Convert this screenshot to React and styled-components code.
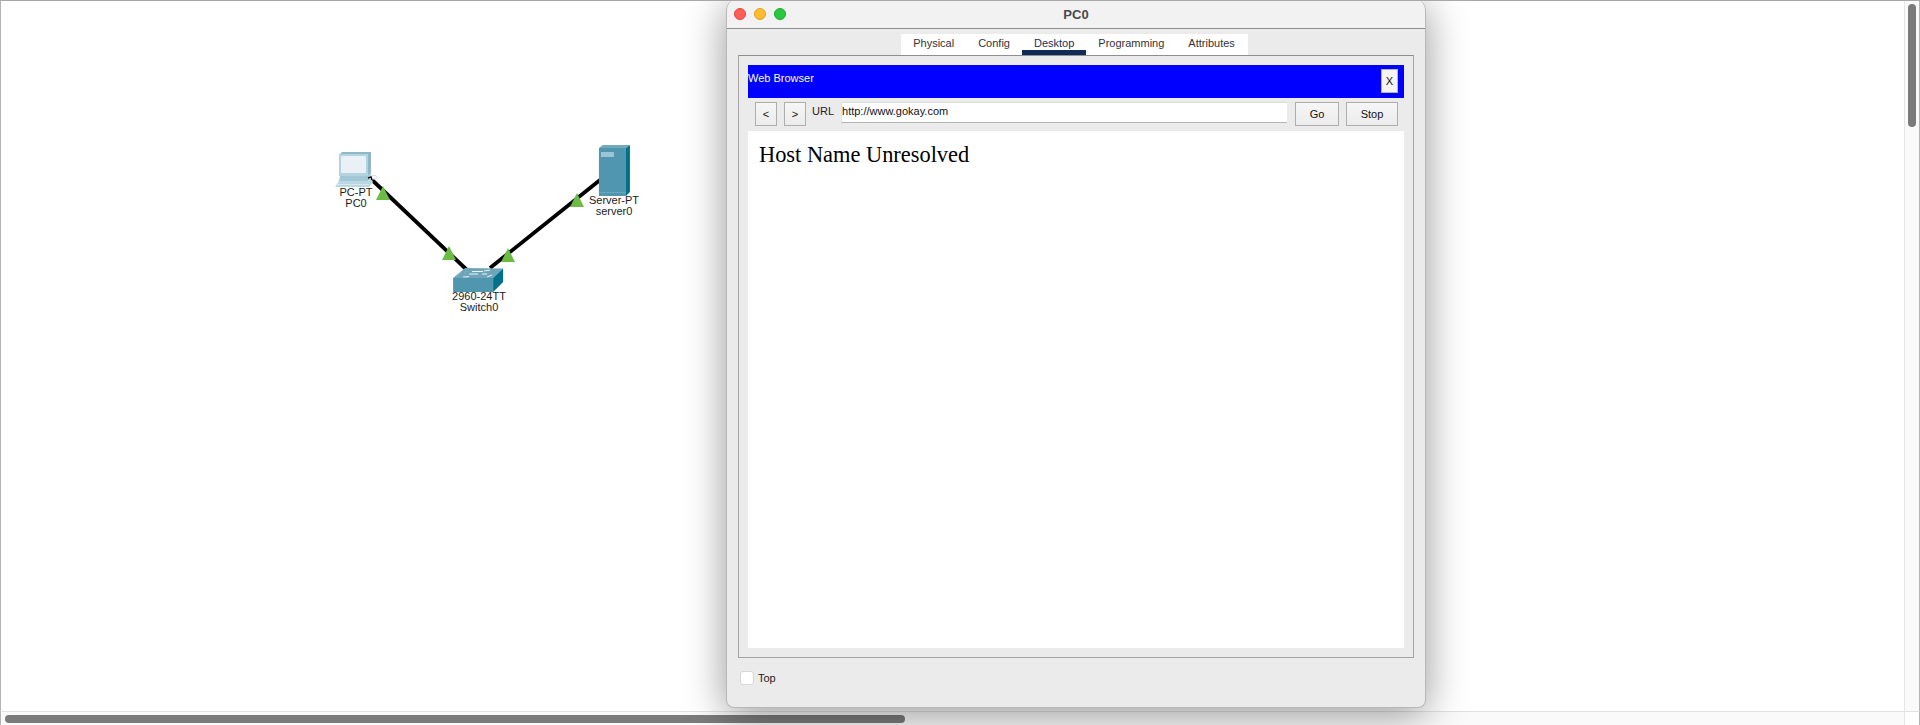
import React from 'react'
import styled, { createGlobalStyle } from 'styled-components'

const GlobalStyle = createGlobalStyle`
  html, body {
    margin: 0;
    padding: 0;
    background: #fff;
    overflow: hidden;
    font-family: 'Liberation Sans', Arial, sans-serif;
  }
`

const tabs = ['Physical', 'Config', 'Desktop', 'Programming', 'Attributes']

const triangles = [
  [383, 186],
  [449, 246],
  [508, 248],
  [577, 193],
]

const PcIcon = () => (
  <svg width='46' height='38' viewBox='333 151 46 38'>
    <polygon points='339,155 342,152 371,152 371,173 368,176 339,176' fill='#8fb8c6' />
    <rect x='339' y='154' width='29' height='22' fill='#b3d4df' />
    <rect x='341' y='156' width='25' height='17' rx='1' fill='#e9f1f6' />
    <polygon points='340,176 368,176 371,173 371,178 368,181 339,181' fill='#a3c7d4' />
    <polygon points='339,181 368,181 371,178 373,182 369,187 335,187' fill='#b9d8e3' />
    <rect x='337' y='184' width='32' height='1' fill='#d6e7ed' />
    <path d='M369 176 l6 -0.5 c3 0.5 2.5 3 -0.5 3.5 l-5 0.5' fill='#fff' stroke='#c5d9e0' strokeWidth='0.8' />
    <path d='M368 178 l3 -1 l1 3' fill='none' stroke='#000' strokeWidth='1.4' />
  </svg>
)

const SwitchIcon = () => (
  <svg width='52' height='26' viewBox='453 267 52 26'>
    <polygon points='453,278 465,268 503,268.5 493,278' fill='#6ea6b9' />
    <rect x='453' y='278' width='40' height='14' fill='#5096ae' />
    <polygon points='493,278 503,268.5 503,282 493,292' fill='#02708a' />
    <path d='M463 277 l6 -0.4 M487 277 l5 -2 M472 271.5 h11 M469 274 h9 M484 271 l6 -1 M482 274 h5' stroke='#e8f2f5' strokeWidth='1' fill='none' />
    <path d='M456 276.5 l6 -5 M467 271 l-3 2' stroke='#82b4c5' strokeWidth='1' fill='none' />
  </svg>
)

const ServerIcon = () => (
  <svg width='32' height='52' viewBox='598 145 32 52'>
    <polygon points='599,148 603,145 630,145 626,148' fill='#72aabd' />
    <rect x='599' y='148' width='27' height='48' fill='#5096ae' />
    <polygon points='626,148 630,145 630,192 626,196' fill='#02708a' />
    <rect x='601' y='152' width='13' height='5' fill='#9cc4d2' />
    <rect x='599' y='192' width='27' height='1' fill='#6aa6ba' />
  </svg>
)

const App = () => {
  return (
    <Page>
      <GlobalStyle />
      <Canvas>
        <Links width='1903' height='710'>
          <line x1='370' y1='178' x2='467' y2='270' />
          <line x1='600' y1='180' x2='490' y2='268' />
          {triangles.map(([x, y]) => (
            <polygon key={x} points={`${x},${y} ${x + 7},${y + 14} ${x - 7},${y + 14}`} />
          ))}
        </Links>
        <Node $x={356} $y={151}>
          <PcIcon />
          <NodeLabel>PC-PT</NodeLabel>
          <NodeLabel>PC0</NodeLabel>
        </Node>
        <Node $x={479} $y={267}>
          <SwitchIcon />
          <NodeLabel>2960-24TT</NodeLabel>
          <NodeLabel>Switch0</NodeLabel>
        </Node>
        <Node $x={614} $y={145}>
          <ServerIcon />
          <NodeLabel>Server-PT</NodeLabel>
          <NodeLabel>server0</NodeLabel>
        </Node>
      </Canvas>
      <VerticalTrack>
        <VerticalThumb />
      </VerticalTrack>
      <HorizontalTrack>
        <HorizontalThumb />
      </HorizontalTrack>
      <Corner />

      <Window>
        <TitleBar>
          <Lights>
            <Light $color='#ff5f57' $edge='#e0443e' />
            <Light $color='#febc2e' $edge='#dea123' />
            <Light $color='#28c840' $edge='#1aab29' />
          </Lights>
          PC0
        </TitleBar>
        <WindowBody>
          <TabBar>
            {tabs.map((tab) => (
              <Tab key={tab} $active={tab === 'Desktop'}>
                {tab}
              </Tab>
            ))}
          </TabBar>
          <Frame>
            <BrowserHeader>
              Web Browser
              <CloseButton>X</CloseButton>
            </BrowserHeader>
            <NavRow>
              <NavButton $width={22}>&lt;</NavButton>
              <NavButton $width={22}>&gt;</NavButton>
              <UrlLabel>URL</UrlLabel>
              <UrlInput readOnly value='http://www.gokay.com' />
              <NavButton $width={44}>Go</NavButton>
              <NavButton $width={52}>Stop</NavButton>
            </NavRow>
            <Content>
              <Message>Host Name Unresolved</Message>
            </Content>
          </Frame>
          <Footer>
            <Check />
            Top
          </Footer>
        </WindowBody>
      </Window>
    </Page>
  )
}

const Page = styled.div`
  position: relative;
  width: 1920px;
  height: 725px;
  overflow: hidden;
  display: grid;
  grid-template-columns: 1fr 16px;
  grid-template-rows: 1fr 14px;
  background: #fff;
  border-top: 1px solid #a8a8a8;
  box-sizing: border-box;
`

const Canvas = styled.div`
  position: relative;
  background: #fff;
  border-left: 1px solid #b4b4b4;
`

const Links = styled.svg`
  position: absolute;
  left: -1px;
  top: -1px;
  line {
    stroke: #000;
    stroke-width: 3.8;
  }
  polygon {
    fill: #6cbb45;
  }
`

const Node = styled.div`
  position: absolute;
  left: ${(p) => p.$x - 1}px;
  top: ${(p) => p.$y - 1}px;
  transform: translateX(-50%);
  display: flex;
  flex-direction: column;
  align-items: center;
  svg {
    display: block;
    margin-bottom: -2px;
  }
`

const NodeLabel = styled.span`
  font-size: 11px;
  line-height: 11px;
  color: #1c1c1c;
  white-space: nowrap;
`

const VerticalTrack = styled.div`
  background: #fafafa;
  border-left: 1px solid #e6e6e6;
  border-right: 1px solid #b4b4b4;
  padding: 3px 3px 0;
`

const VerticalThumb = styled.div`
  width: 8px;
  height: 123px;
  border-radius: 4px;
  background: #7b7b7b;
`

const HorizontalTrack = styled.div`
  background: #fafafa;
  border-top: 1px solid #e2e2e2;
  border-left: 1px solid #b4b4b4;
  padding: 3px 0 0 4px;
`

const HorizontalThumb = styled.div`
  width: 900px;
  height: 8px;
  border-radius: 4px;
  background: #7b7b7b;
`

const Corner = styled.div`
  background: #fff;
  border-top: 1px solid #e2e2e2;
  border-left: 1px solid #e6e6e6;
  border-right: 1px solid #b4b4b4;
`

const Window = styled.section`
  position: absolute;
  left: 726px;
  top: -1px;
  width: 700px;
  height: 708px;
  display: flex;
  flex-direction: column;
  box-sizing: border-box;
  border-radius: 10px 10px 8px 8px;
  background: #ebebeb;
  border: 1px solid #b8b8b8;
  border-top: 0;
  box-shadow: 0 6px 40px rgba(0, 0, 0, 0.42);
`

const TitleBar = styled.header`
  position: relative;
  height: 28px;
  flex: none;
  display: flex;
  align-items: center;
  justify-content: center;
  background: #f2f2f2;
  border-bottom: 1px solid #8c8c8c;
  border-radius: 10px 10px 0 0;
  font-size: 13px;
  font-weight: 700;
  color: #4a4a4a;
`

const Lights = styled.div`
  position: absolute;
  left: 7px;
  top: 8px;
  display: flex;
  gap: 8px;
`

const Light = styled.span`
  width: 12px;
  height: 12px;
  box-sizing: border-box;
  border-radius: 50%;
  background: ${(p) => p.$color};
  border: 1px solid ${(p) => p.$edge};
`

const WindowBody = styled.div`
  flex: 1;
  display: flex;
  flex-direction: column;
  padding: 5px 11px 0;
`

const TabBar = styled.nav`
  align-self: center;
  height: 21px;
  display: flex;
  background: #fff;
  margin-left: -3px;
  padding-right: 1px;
`

const Tab = styled.div`
  box-sizing: border-box;
  height: 21px;
  padding: 3px 12px 0;
  font-size: 11px;
  line-height: 13px;
  color: ${(p) => (p.$active ? '#17305c' : '#333')};
  border-bottom: 5px solid ${(p) => (p.$active ? '#0f2a56' : 'transparent')};
`

const Frame = styled.div`
  height: 603px;
  flex: none;
  box-sizing: border-box;
  display: flex;
  flex-direction: column;
  padding: 9px 9px;
  border: 1px solid #a4a4a4;
  border-top-color: #8f8f8f;
`

const BrowserHeader = styled.div`
  position: relative;
  height: 33px;
  flex: none;
  box-sizing: border-box;
  padding-top: 7px;
  background: #0000ff;
  color: #fff;
  font-size: 11px;
  line-height: 13px;
`

const CloseButton = styled.button`
  position: absolute;
  right: 6px;
  top: 4px;
  width: 17px;
  height: 24px;
  padding: 0;
  background: #f5f5f5;
  border: 1px solid #b5b5b5;
  color: #111;
  font-family: inherit;
  font-size: 11px;
`

const NavRow = styled.div`
  height: 33px;
  flex: none;
  box-sizing: border-box;
  display: flex;
  align-items: flex-start;
  gap: 7px;
  padding: 4px 6px 0 7px;
`

const NavButton = styled.button`
  width: ${(p) => p.$width}px;
  height: 24px;
  padding: 0;
  flex: none;
  background: linear-gradient(#f6f6f6, #ebebeb);
  border: 1px solid #aeaeae;
  color: #111;
  font-family: inherit;
  font-size: 11px;
`

const UrlLabel = styled.label`
  font-size: 11px;
  line-height: 18px;
  color: #222;
  margin: 0 0 0 -1px;
`

const UrlInput = styled.input`
  flex: 1;
  min-width: 0;
  height: 21px;
  box-sizing: border-box;
  padding: 0 0 3px;
  margin-right: 1px;
  background: #fff;
  border: 0;
  border-top: 1px solid #dcdcdc;
  border-bottom: 1px solid #b5b5b5;
  border-left: 1px solid #e2e2e2;
  outline: none;
  color: #111;
  font-family: inherit;
  font-size: 11px;
`

const Content = styled.div`
  flex: 1;
  background: #fff;
  padding: 11px;
`

const Message = styled.h1`
  margin: 0;
  font-family: 'Liberation Serif', 'Times New Roman', serif;
  font-size: 22.4px;
  font-weight: 400;
  line-height: 26px;
  color: #000;
`

const Footer = styled.label`
  display: flex;
  align-items: center;
  gap: 4px;
  margin-top: 13px;
  height: 14px;
  padding-left: 2px;
  font-size: 11px;
  color: #222;
`

const Check = styled.span`
  width: 14px;
  height: 14px;
  box-sizing: border-box;
  background: #fff;
  border: 1px solid #d6d6d6;
  border-radius: 3px;
`

export default App
